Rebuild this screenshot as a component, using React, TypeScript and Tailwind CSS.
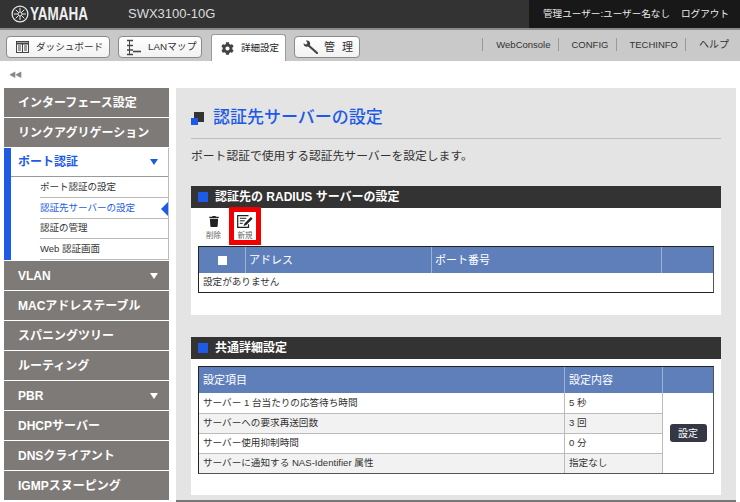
import { FaTrash, FaCog } from "react-icons/fa";

const BLUE = "text-[#1d5be6]";

function YamahaMark() {
  return (
    <svg width="18" height="18" viewBox="0 0 18 18" fill="none" stroke="#e8e8e8" strokeWidth="1">
      <circle cx="9" cy="9" r="7.900" strokeWidth="1.300" />
      <circle cx="9" cy="9" r="2" />
      <path d="M9 2.800v4M9 11v4M2.800 9h4M11 9h4M4.700 4.700l2.900 2.900M10.400 10.400l2.900 2.900M13.300 4.700l-2.900 2.900M7.600 10.400l-2.900 2.900" />
    </svg>
  );
}

function DashIcon() {
  return (
    <svg width="13" height="12" viewBox="0 0 13 12" fill="none" stroke="#444" className="shrink-0">
      <rect x="0.500" y="0.500" width="12" height="11" />
      <path d="M1 2.500h11" strokeWidth="2" />
      <path d="M6.500 3v8M2 5h3M8 5h3M2 7h3M8 7h3M2 9h3M8 9h3" />
    </svg>
  );
}

function MapIcon() {
  return (
    <svg width="14" height="17" viewBox="0 0 14 17" fill="none" stroke="#444" className="shrink-0">
      <path d="M0 1.500h6M0 6.500h6M0 11h6M0 15.500h6" strokeWidth="1.600" />
      <path d="M2.500 1.500v14" strokeWidth="1" />
      <path d="M6 12.500h8" strokeWidth="1.600" />
    </svg>
  );
}

function WrenchIcon() {
  return (
    <svg width="15" height="14" viewBox="0 0 15 14" fill="none" className="shrink-0">
      <path d="M4.500 4.500l9.500 8.500" stroke="#444" strokeWidth="2.200" strokeLinecap="round" />
      <path d="M0.600 3.200l2.400 1.600 1.700-1.500-1.700-2.500c2-.8 4.300.6 4.200 3 0 1.800-1.800 3.200-3.800 3C1.800 6.600.3 5 .6 3.200z" fill="#444" />
    </svg>
  );
}

function EditIcon() {
  return (
    <svg width="17" height="13" viewBox="0 0 17 13" fill="none" stroke="#222">
      <path d="M11.500 0.700H0.700v11.600h10.800v-3" strokeWidth="1.200" />
      <path d="M2.800 3.300h6.500M2.800 5.800h5M2.800 8.300h3" strokeWidth="1" />
      <path d="M6.500 11l1-2.600L13.800 2l1.800 1.700-6.300 6.300z" fill="#222" stroke="none" />
    </svg>
  );
}

function Caret({ color = "border-t-white" }: { color?: string }) {
  return <span className={`w-0 h-0 border-x-[4px] border-x-transparent border-t-[6px] ${color}`} />;
}

function Header() {
  return (
    <div className="h-[28px] shrink-0 flex bg-[#333333]">
      <div className="w-[128px] shrink-0 flex items-center pl-[11px] gap-px">
        <YamahaMark />
        <span className="text-[#eee] font-bold text-[18px] leading-none scale-x-75 origin-left whitespace-nowrap">YAMAHA</span>
      </div>
      <span className="self-center text-[#ddd] text-[13px]">SWX3100-10G</span>
      <div className="ml-auto w-[211px] bg-[#181818] text-[#eee] text-[9.600px] flex items-center justify-end pr-[11px] gap-[11px] whitespace-nowrap">
        <span>管理ユーザー:ユーザー名なし</span>
        <span>ログアウト</span>
      </div>
    </div>
  );
}

const navButton =
  "h-[22px] mt-[6px] flex items-center bg-gradient-to-b from-white to-[#f2f2f2] border border-[#8a8a8a] rounded-[4px] text-[9.800px] text-[#333] whitespace-nowrap";

function TopNav() {
  return (
    <div className="h-[33px] shrink-0 flex bg-[#c9c9c9] border-t-2 border-[#8a8a8a] pl-[6px]">
      <div className={`${navButton} w-[104px] pl-[9px] gap-[7px]`}>
        <DashIcon />
        <span className="text-[9.600px]">ダッシュボード</span>
      </div>
      <div className={`${navButton} w-[84px] ml-[8px] pl-[8px] gap-[7px]`}>
        <MapIcon />
        <span>LANマップ</span>
      </div>
      <div className="ml-[9px] w-[75px] h-[27px] mt-[4px] bg-white border border-b-0 border-[#9a9a9a] rounded-t-[3px] flex items-center gap-[7px] pl-[9px] text-[9.500px] text-[#222] whitespace-nowrap">
        <FaCog className="w-[13px] h-[13px] text-[#444]" />
        <span>詳細設定</span>
      </div>
      <div className={`${navButton} w-[66px] ml-[8px] pl-[8px] gap-[6px]`}>
        <WrenchIcon />
        <span className="text-[11px] tracking-[7px]">管理</span>
      </div>
      <div className="ml-auto mt-[8px] flex items-start h-[13px] text-[9.500px] leading-[13px] text-[#333] pr-[11px] whitespace-nowrap">
        <span className="border-l border-[#999] pl-[13px] pr-[8px]">WebConsole</span>
        <span className="border-l border-[#999] pl-[12px] pr-[8px]">CONFIG</span>
        <span className="border-l border-[#999] pl-[12px] pr-[7px]">TECHINFO</span>
        <span className="border-l border-[#999] pl-[13px] text-[10px]">ヘルプ</span>
      </div>
    </div>
  );
}

const topMenu = ["インターフェース設定", "リンクアグリゲーション"];
const bottomMenu = [
  { label: "VLAN", caret: true },
  { label: "MACアドレステーブル" },
  { label: "スパニングツリー" },
  { label: "ルーティング" },
  { label: "PBR", caret: true },
  { label: "DHCPサーバー" },
  { label: "DNSクライアント" },
  { label: "IGMPスヌーピング" },
];

function MenuItem({ label, caret }: { label: string; caret?: boolean }) {
  return (
    <div className="h-[29px] shrink-0 mb-px bg-[#7e7a78] flex items-center justify-between pl-[14px] pr-[11px] text-white font-bold text-[12px]">
      <span className="whitespace-nowrap">{label}</span>
      {caret && <Caret />}
    </div>
  );
}

function Sidebar() {
  const sub = [
    { label: "ポート認証の設定" },
    { label: "認証先サーバーの設定", active: true },
    { label: "認証の管理" },
    { label: "Web 認証画面" },
  ];
  return (
    <div className="w-[165px] shrink-0 flex flex-col ml-[4px]">
      {topMenu.map((m) => (
        <MenuItem key={m} label={m} />
      ))}
      <div className="h-[112px] shrink-0 bg-white border-l-[7px] border-l-[#1d5be6] border-r border-r-[#bbb] mb-px">
        <div className={`h-[29px] flex items-center justify-between pl-[7px] pr-[10px] border-b border-[#999] font-bold text-[12px] ${BLUE}`}>
          <span>ポート認証</span>
          <Caret color="border-t-[#1d5be6]" />
        </div>
        <div className="pl-[29px]">
          {sub.map((s) => (
            <div
              key={s.label}
              className={`relative h-[20.750px] flex items-center border-b border-[#bbb] text-[9.500px] ${s.active ? BLUE : "text-[#333]"}`}
            >
              {s.label}
              {s.active && (
                <span className="absolute right-0 top-[4px] w-0 h-0 border-y-[7px] border-y-transparent border-r-[7px] border-r-[#1d5be6]" />
              )}
            </div>
          ))}
        </div>
      </div>
      {bottomMenu.map((m) => (
        <MenuItem key={m.label} {...m} />
      ))}
    </div>
  );
}

function SectionHead({ title }: { title: string }) {
  return (
    <div className="h-[22px] bg-[#333333] flex items-center gap-[7px] pl-[7px] text-white font-bold text-[12px]">
      <span className="w-[10px] h-[10px] bg-[#1d5be6]" />
      {title}
    </div>
  );
}

function RadiusSection() {
  return (
    <div className="bg-white h-[129px]">
      <SectionHead title="認証先の RADIUS サーバーの設定" />
      <div className="flex pl-[7px] h-[38px]">
        <div className="w-[31px] flex flex-col items-center pt-[8px] text-[7.500px] leading-[8px] text-[#666]">
          <FaTrash className="w-[10px] h-[11px] text-[#222]" />
          <span className="mt-[5px]">削除</span>
        </div>
        <div className="w-[32px] h-[38px] -mt-px relative border-[5px] border-[#f00000] bg-white flex flex-col items-center pt-[3px] text-[7.500px] leading-[8px] text-[#666]">
          <EditIcon />
          <span className="mt-[4px] whitespace-nowrap">新規</span>
        </div>
      </div>
      <div className="mx-[7px] border border-[#222] border-r-[#555]">
        <div className="flex h-[26px] bg-[#5f7fbb] text-white text-[11px]">
          <div className="w-[47px] flex items-center justify-center border-r border-[#9db0d6]">
            <span className="w-[9px] h-[9px] bg-white" />
          </div>
          <div className="w-[186px] flex items-center pl-[3px] border-r border-[#9db0d6]">アドレス</div>
          <div className="w-[230px] flex items-center pl-[3px] border-r border-[#9db0d6]">ポート番号</div>
        </div>
        <div className="h-[19px] flex items-center pl-[4px] text-[9.600px] text-[#333]">設定がありません</div>
      </div>
    </div>
  );
}

const rows = [
  ["サーバー 1 台当たりの応答待ち時間", "5 秒"],
  ["サーバーへの要求再送回数", "3 回"],
  ["サーバー使用抑制時間", "0 分"],
  ["サーバーに通知する NAS-Identifier 属性", "指定なし"],
];

function CommonSection() {
  return (
    <div className="bg-white h-[158px] mt-[22px]">
      <SectionHead title="共通詳細設定" />
      <div className="mx-[7px] mt-[7px] border border-[#222] border-r-[#555] border-b-[#555] flex text-[9.600px] text-[#333]">
        {[0, 1].map((col) => (
          <div key={col} className={`${col === 0 ? "w-[366px]" : "w-[98px]"} flex flex-col`}>
            <div className="h-[26px] flex items-center pl-[4px] border-r border-[#9db0d6] bg-[#5f7fbb] text-white text-[11px]">
              {col === 0 ? "設定項目" : "設定内容"}
            </div>
            {rows.map((r, i) => (
              <div
                key={r[col]}
                className={`h-[20px] flex items-center pl-[4px] border-r border-[#bbb] ${i > 0 ? "border-t border-t-[#bbb]" : ""} ${i % 2 ? "bg-[#f2f2f2]" : "bg-white"}`}
              >
                {r[col]}
              </div>
            ))}
          </div>
        ))}
        <div className="flex-1 flex flex-col">
          <div className="h-[26px] bg-[#5f7fbb]" />
          <div className="flex-1 flex items-center justify-center">
            <div className="w-[37px] h-[18px] rounded-[3px] bg-[#333844] text-white text-[10px] flex items-center justify-center">設定</div>
          </div>
        </div>
      </div>
    </div>
  );
}

export default function App() {
  return (
    <div className="w-[740px] h-[502px] overflow-hidden bg-white flex flex-col font-['Liberation_Sans','Noto_Sans_CJK_JP',sans-serif]">
      <Header />
      <TopNav />
      <div className="h-[27px] shrink-0 flex items-center pl-[9px] text-[#888] text-[7px] leading-none tracking-[-1px]">◀◀</div>
      <div className="flex flex-1 min-h-0">
        <Sidebar />
        <div className="flex-1 ml-[7px] mr-[4px] bg-[#e4e4e4] border-b-2 border-[#777] px-[15px] overflow-hidden">
          <div className="h-[51px] flex items-center border-b border-[#bdbdbd] gap-[8px] pt-[10px]">
            <span className="relative w-[14px] h-[13px]">
              <span className="absolute right-[1px] top-0 w-[10px] h-[10px] bg-[#333]" />
              <span className="absolute left-0 bottom-0 w-[7px] h-[7px] bg-[#1d5be6]" />
            </span>
            <h1 className={`${BLUE} text-[17px] font-medium`}>認証先サーバーの設定</h1>
          </div>
          <p className="mt-[9px] h-[38px] text-[11.800px] text-[#333]">ポート認証で使用する認証先サーバーを設定します。</p>
          <RadiusSection />
          <CommonSection />
        </div>
      </div>
    </div>
  );
}
